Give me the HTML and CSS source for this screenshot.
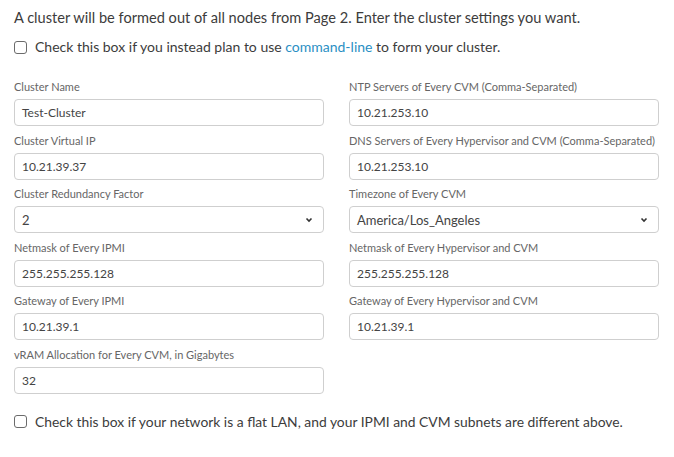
FILE: index.html
```html
<!DOCTYPE html>
<html>
<head>
<meta charset="utf-8">
<link rel="stylesheet" href="styles.css">
</head>
<body>
<div class="page">
  <p class="intro">A cluster will be formed out of all nodes from Page 2. Enter the cluster settings you want.</p>
  <label class="check"><span class="box"></span><span class="ctext">Check this box if you instead plan to use <a class="link">command-line</a> to form your cluster.</span></label>
  <div class="grid">
    <div class="col">
      <div class="field"><div class="lbl">Cluster Name</div><div class="input">Test-Cluster</div></div>
      <div class="field"><div class="lbl">Cluster Virtual IP</div><div class="input">10.21.39.37</div></div>
      <div class="field"><div class="lbl">Cluster Redundancy Factor</div><div class="input select"><span class="sv">2</span><svg class="caret" width="8" height="6" viewBox="0 0 8 6"><path d="M1.5 1.5 L4 4 L6.5 1.5" fill="none" stroke="#333" stroke-width="1.6"/></svg></div></div>
      <div class="field"><div class="lbl">Netmask of Every IPMI</div><div class="input">255.255.255.128</div></div>
      <div class="field"><div class="lbl">Gateway of Every IPMI</div><div class="input">10.21.39.1</div></div>
      <div class="field"><div class="lbl">vRAM Allocation for Every CVM, in Gigabytes</div><div class="input">32</div></div>
    </div>
    <div class="col">
      <div class="field"><div class="lbl">NTP Servers of Every CVM (Comma-Separated)</div><div class="input">10.21.253.10</div></div>
      <div class="field"><div class="lbl">DNS Servers of Every Hypervisor and CVM (Comma-Separated)</div><div class="input">10.21.253.10</div></div>
      <div class="field"><div class="lbl">Timezone of Every CVM</div><div class="input select"><span class="sv">America/Los_Angeles</span><svg class="caret" width="8" height="6" viewBox="0 0 8 6"><path d="M1.5 1.5 L4 4 L6.5 1.5" fill="none" stroke="#333" stroke-width="1.6"/></svg></div></div>
      <div class="field"><div class="lbl">Netmask of Every Hypervisor and CVM</div><div class="input">255.255.255.128</div></div>
      <div class="field"><div class="lbl">Gateway of Every Hypervisor and CVM</div><div class="input">10.21.39.1</div></div>
    </div>
  </div>
  <label class="check bottom"><span class="box"></span><span class="ctext">Check this box if your network is a flat LAN, and your IPMI and CVM subnets are different above.</span></label>
</div>
</body>
</html>
```
FILE: styles.css
```css
html, body { margin: 0; padding: 0; background: #fff; }
body { font-family: Lato, "Open Sans", sans-serif; color: #333; }
.page { padding: 9px 15px 0 14px; }
.intro { margin: 0; font-size: 14.6px; line-height: 18px; color: #3c3c3c; }
.check { display: flex; align-items: center; font-size: 14px; line-height: 18px; color: #3c3c3c; margin-top: 11px; }
.box { width: 11px; height: 11px; border: 1px solid #6b6b6b; border-radius: 3px; margin-right: 8px; flex: none; }
.ctext { white-space: nowrap; }
.link { color: #2a8fc4; }
.grid { display: grid; grid-template-columns: 310px 310px; column-gap: 25px; margin-top: 24px; }
.col { display: flex; flex-direction: column; }
.field { display: flex; flex-direction: column; height: 53.6px; }
.lbl { font-size: 11px; line-height: 14px; color: #666; margin-bottom: 5px; }
.input { box-sizing: border-box; height: 27px; border: 1px solid #cfcfcf; border-radius: 4px; font-size: 12px; color: #444; padding: 0 7px; display: flex; align-items: center; }
.select { justify-content: space-between; font-size: 13px; padding-right: 10px; }
.caret { display: block; }
.bottom { margin-top: 11px; font-size: 13.85px; }
```
